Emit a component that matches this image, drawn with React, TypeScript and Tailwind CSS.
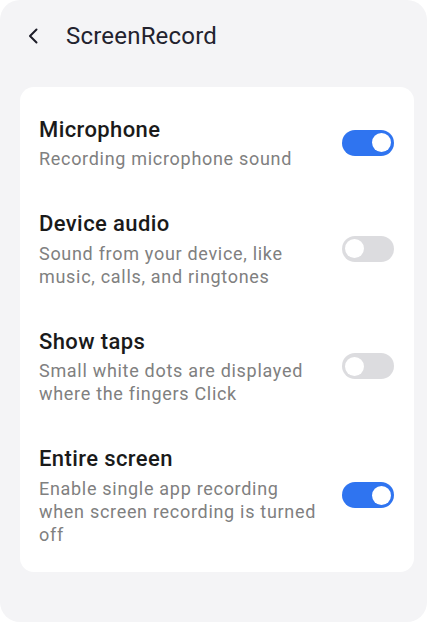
import { useState } from 'react';

type Item = { title: string; desc: string; on: boolean };

const initial: Item[] = [
  { title: 'Microphone', desc: 'Recording microphone sound', on: true },
  { title: 'Device audio', desc: 'Sound from your device, like music, calls, and ringtones', on: false },
  { title: 'Show taps', desc: 'Small white dots are displayed where the fingers Click', on: false },
  { title: 'Entire screen', desc: 'Enable single app recording when screen recording is turned off', on: true },
];

function Toggle({ on, onClick }: { on: boolean; onClick: () => void }) {
  return (
    <button
      onClick={onClick}
      className={`w-[52px] h-[26px] rounded-full flex items-center px-[3px] shrink-0 ${
        on ? 'bg-[#2f74f0] justify-end' : 'bg-[#dcdcdf] justify-start'
      }`}
    >
      <span className="size-[19px] rounded-full bg-white block" />
    </button>
  );
}

export default function App() {
  const [items, setItems] = useState(initial);

  const flip = (i: number) =>
    setItems(items.map((it, j) => (j === i ? { ...it, on: !it.on } : it)));

  return (
    <div className="w-[427px] h-[622px] bg-white" style={{ fontFamily: 'Roboto, sans-serif' }}>
      <div className="h-full bg-[#f4f4f6] rounded-[20px] flex flex-col">
        {/* Header */}
        <div className="h-[72px] flex items-center pl-[28px]">
          <svg width="10" height="16" viewBox="0 0 10 16" fill="none">
            <path d="M8.5 1.5 L2 8 L8.5 14.5" stroke="#1c1c28" strokeWidth="2" strokeLinecap="round" strokeLinejoin="round" />
          </svg>
          <h1 className="ml-[28px] text-[24px] leading-[30px] tracking-[0.2px] text-[#22222e]">ScreenRecord</h1>
        </div>

        {/* Settings card */}
        <div className="mt-[15px] ml-[20px] mr-[13px] bg-white rounded-[14px] pt-[28.5px] pb-[26px] pl-[19px] pr-[20px] flex flex-col gap-[40px]">
          {items.map((it, i) => (
            <div key={it.title} className="flex items-center gap-[18px]">
              <div className="flex-1">
                <div className="text-[22px] leading-[28px] tracking-[0.4px] font-medium text-[#1a1a1a]">{it.title}</div>
                <div className="mt-[3.5px] text-[18px] leading-[23px] tracking-[0.7px] text-[#808080]">{it.desc}</div>
              </div>
              <Toggle on={it.on} onClick={() => flip(i)} />
            </div>
          ))}
        </div>
      </div>
    </div>
  );
}
